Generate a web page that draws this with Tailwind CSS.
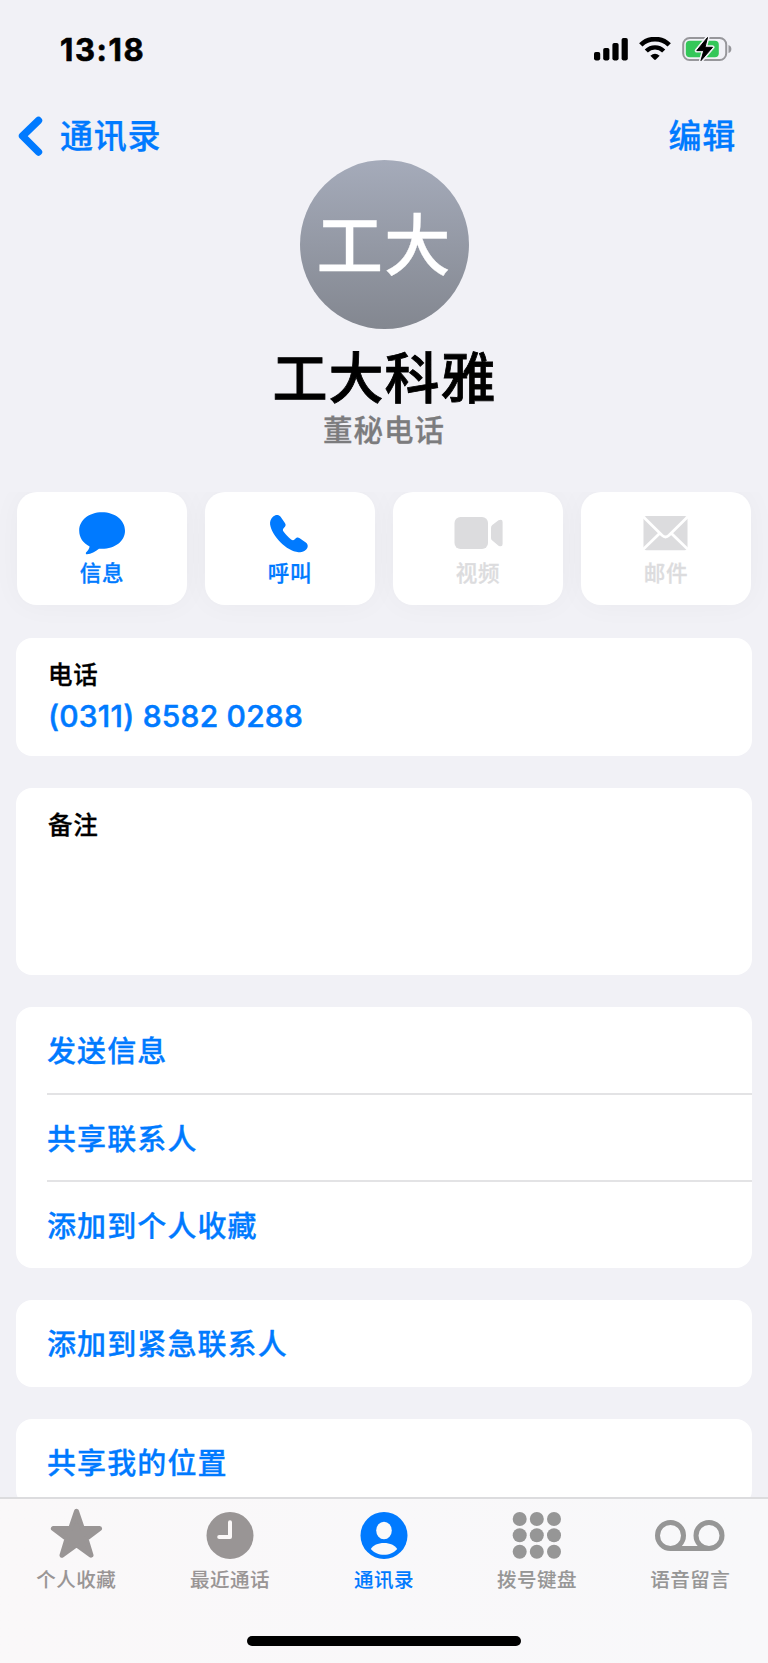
<!DOCTYPE html>
<html lang="zh-CN">
<head>
    <meta charset="UTF-8">
    <meta name="viewport" content="width=device-width, initial-scale=1.0">
    <title>工大科雅 | 通讯录</title>
    <script src="https://cdn.jsdelivr.net/npm/@tailwindcss/browser@4"></script>
    <style>
        body { font-family: Inter, "Noto Sans CJK SC", sans-serif; -webkit-text-stroke: 0.3px currentColor; }
    </style>
</head>
<body class="bg-[#f1f1f6] font-medium text-black">
    <div class="flex h-[1663px] w-[768px] flex-col overflow-hidden">
        <div class="flex h-[98px] shrink-0 items-center justify-between pl-[60px] pr-[36px]">
            <span class="pt-px text-[31px] leading-[30px] font-bold tracking-[1.6px] [-webkit-text-stroke:0.6px]">13:18</span>
            <div class="flex items-center">
                <svg class="mr-[11px]" width="34" height="24" viewBox="0 0 34 24">
                    <rect x="0" y="15" width="6.2" height="8.4" rx="1.8"/>
                    <rect x="9.2" y="11" width="6.2" height="12.4" rx="1.8"/>
                    <rect x="18.4" y="6" width="6.2" height="17.4" rx="1.8"/>
                    <rect x="27.6" y="1" width="6.2" height="22.4" rx="1.8"/>
                </svg>
                <svg class="mr-[11px]" width="32" height="24" viewBox="0 0 32 24">
                    <path d="M1.8 7.9 A20.3 20.3 0 0 1 30.2 7.9" fill="none" stroke="#000" stroke-width="4.8"/>
                    <path d="M7.3 14 A12.3 12.3 0 0 1 24.7 14" fill="none" stroke="#000" stroke-width="4.4"/>
                    <path d="M11.4 18.7 Q16 15 20.6 18.7 L16.9 22.6 Q16 23.4 15.1 22.6 Z"/>
                </svg>
                <svg width="50" height="26" viewBox="0 0 50 26">
                    <rect x="1.2" y="2" width="43" height="22" rx="6.5" fill="none" stroke="#97979b" stroke-width="2"/>
                    <path d="M46.5 9 Q49.4 10 49.4 13 T46.5 17 Z" fill="#97979b"/>
                    <rect x="3.8" y="4.8" width="33" height="16.4" rx="4" fill="#34c759"/>
                    <path d="M25.5 1.5 L14.8 14.6 H21.8 L19 24.6 L30.5 11.3 H23 Z" stroke="#f1f1f6" stroke-width="4" stroke-linejoin="round"/>
                    <path d="M25.5 1.5 L14.8 14.6 H21.8 L19 24.6 L30.5 11.3 H23 Z" stroke="#000" stroke-width="1" stroke-linejoin="round"/>
                </svg>
            </div>
        </div>

        <div class="flex h-[62px] shrink-0 items-start justify-between pl-[18px] pr-[32px] pt-[18px] text-[33px] leading-[40px] tracking-[0.8px] text-[#007aff]">
            <a href="#" class="flex">
                <svg class="mr-[17px]" width="25" height="40" viewBox="0 0 25 40">
                    <path d="M20.5 4.5 L4.5 20 L20.5 36" fill="none" stroke="#007aff" stroke-width="7.4" stroke-linecap="round" stroke-linejoin="round"/>
                </svg>
                通讯录
            </a>
            <a href="#">编辑</a>
        </div>

        <header class="flex h-[332px] shrink-0 flex-col items-center">
            <div class="flex size-[169px] items-center justify-center rounded-full bg-linear-to-b from-[#a5abba] to-[#838790] pt-[3px] text-[66.5px] leading-[66px] tracking-[1px] text-white">工大</div>
            <h1 class="mt-[19px] pl-px text-[55px] leading-[60px] tracking-[1px] [-webkit-text-stroke:0.8px]">工大科雅</h1>
            <p class="mt-[2px] text-[29.5px] leading-[40px] tracking-[1px] text-[#7c7c7e]">董秘电话</p>
        </header>

        <main class="flex flex-1 flex-col overflow-hidden px-4 text-[#007aff]">
            <div class="mb-[33px] flex shrink-0 justify-between px-px text-[21.5px] leading-[26px] tracking-[0.8px]">
                <div class="flex h-[113px] w-[170px] flex-col items-center rounded-[20px] bg-white pt-[17px] shadow-[0_0_30px_rgba(0,0,0,0.035)]">
                    <svg width="48" height="48" viewBox="0 0 48 48" fill="currentColor">
                        <path d="M24 3.3 C37 3.3 47 11.3 47 21.7 C47 32 37 39.8 24 39.8 L21 39.7 C17.5 42.6 13 45.2 9 45.3 C7.8 45.3 7.4 44 8.2 43.2 C10 41.5 11.4 39.6 11.6 37.4 C5 34 1.2 28.5 1.2 21.7 C1.2 11.3 11 3.3 24 3.3 Z"/>
                    </svg>
                    <span class="mt-[3px]">信息</span>
                </div>
                <div class="flex h-[113px] w-[170px] flex-col items-center rounded-[20px] bg-white pt-[17px] shadow-[0_0_30px_rgba(0,0,0,0.035)]">
                    <svg width="48" height="48" viewBox="0 0 48 48" fill="currentColor">
                        <path d="M7.2 7.6 C9.2 5.6 12.7 5.2 14.6 7.8 L18.9 14 C20.2 16 19.6 17.2 18 18.8 C16.3 20.5 16.6 21.4 17.9 23.1 C20 26 22 28 24.8 30.2 C26.4 31.5 27.3 31.8 28.8 30.3 C30.4 28.6 31.7 28 33.7 29.3 L39.8 33.5 C42.6 35.5 42 38.8 40.2 40.6 C37.8 43 35.4 43.6 32.4 43.2 C26.4 42.4 19.9 38.8 14.4 33.2 C8.8 27.6 4.9 21 4.1 15.6 C3.8 12.5 4.7 10 7.2 7.6 Z"/>
                    </svg>
                    <span class="mt-[3px]">呼叫</span>
                </div>
                <div class="flex h-[113px] w-[170px] flex-col items-center rounded-[20px] bg-white pt-[17px] text-[#dcdcde] shadow-[0_0_30px_rgba(0,0,0,0.035)]">
                    <svg width="50" height="48" viewBox="0 0 50 48" fill="currentColor">
                        <rect x="1.5" y="8" width="33.5" height="32" rx="6"/>
                        <path d="M38 19 Q38 17.2 39.3 16 L45.5 11.3 Q49.6 9.6 49.6 13 V35 Q49.6 38.4 45.5 36.7 L39.3 31.5 Q38 30.5 38 29 Z"/>
                    </svg>
                    <span class="mt-[3px]">视频</span>
                </div>
                <div class="flex h-[113px] w-[170px] flex-col items-center rounded-[20px] bg-white pt-[17px] text-[#dcdcde] shadow-[0_0_30px_rgba(0,0,0,0.035)]">
                    <svg width="48" height="48" viewBox="0 0 48 48">
                        <rect x="1.5" y="7" width="44" height="34.2" rx="3" fill="currentColor"/>
                        <path d="M1 7.5 L20 26.3 Q23.5 29.6 27 26.3 L46 7.5 M1 40.5 L17.5 24.4 M46 40.5 L29.5 24.4" fill="none" stroke="#fff" stroke-width="2.8"/>
                    </svg>
                    <span class="mt-[3px]">邮件</span>
                </div>
            </div>

            <section class="mb-8 h-[118px] shrink-0 rounded-2xl bg-white px-8 pt-[21px]">
                <h2 class="text-[24.5px] leading-[32px] tracking-[0.8px] text-black">电话</h2>
                <p class="mt-[7px] text-[30px] leading-[36px] tracking-[0.2px] [-webkit-text-stroke:0.5px]">(0311) 8582 0288</p>
            </section>

            <section class="mb-8 h-[187px] shrink-0 rounded-2xl bg-white px-8 pt-[21px]">
                <h2 class="text-[24.5px] leading-[32px] tracking-[0.8px] text-black">备注</h2>
            </section>

            <ul class="mb-8 shrink-0 rounded-2xl bg-white pl-[31px] text-[29px] leading-[90px] tracking-[1.1px]">
                <li class="h-[88px] border-b-2 border-[#e3e3e5]">发送信息</li>
                <li class="h-[87px] border-b-2 border-[#e3e3e5]">共享联系人</li>
                <li class="h-[86px]">添加到个人收藏</li>
            </ul>

            <ul class="mb-8 h-[87px] shrink-0 rounded-2xl bg-white pl-[31px] text-[29px] leading-[90px] tracking-[1.1px]">
                <li>添加到紧急联系人</li>
            </ul>

            <ul class="h-[87px] shrink-0 rounded-2xl bg-white pl-[31px] text-[29px] leading-[90px] tracking-[1.1px]">
                <li>共享我的位置</li>
            </ul>
        </main>

        <nav class="flex h-[166px] shrink-0 flex-col items-center border-t-2 border-[#dcdcde] bg-linear-to-r from-[#faf8f9] to-[#f8f8fa] text-[#969696] [-webkit-text-stroke:0.1px]">
            <div class="grid h-[137px] w-full shrink-0 grid-cols-5 text-[19.5px] leading-[24px] tracking-[0.5px]">
                <a href="#" class="flex flex-col items-center pt-[8px] text-[#999595]">
                    <svg width="54" height="56" viewBox="0 0 54 56" fill="currentColor" stroke="currentColor" stroke-width="5" stroke-linejoin="round">
                        <path d="M26.5 4.3 L32.3 21.4 L49.6 21.6 L36 31.8 L41 48.2 L26.5 37.8 L12 48.2 L17 31.8 L3.4 21.6 L20.7 21.4 Z"/>
                    </svg>
                    <span class="mt-[5px] mr-px">个人收藏</span>
                </a>
                <a href="#" class="flex flex-col items-center pt-[8px] text-[#999595]">
                    <svg class="mr-px" width="54" height="56" viewBox="0 0 54 56">
                        <circle cx="27" cy="28.5" r="23.5" fill="currentColor"/>
                        <path d="M27 15.3 V30 H16.2" fill="none" stroke="#fbf8f8" stroke-width="4" stroke-linecap="round" stroke-linejoin="round"/>
                    </svg>
                    <span class="mt-[5px] mr-px">最近通话</span>
                </a>
                <a href="#" class="flex flex-col items-center pt-[8px] text-[#007aff]">
                    <svg width="54" height="56" viewBox="0 0 54 56">
                        <circle cx="27" cy="28.5" r="23.5" fill="currentColor"/>
                        <ellipse cx="27" cy="23.5" rx="7.8" ry="8.8" fill="#f9f9fa"/>
                        <path d="M13.8 42 C16 38.3 21 36 27 36 C33 36 38 38.3 40.2 42 C37 45.6 32.3 47.8 27 47.8 C21.7 47.8 17 45.6 13.8 42 Z" fill="#f9f9fa"/>
                    </svg>
                    <span class="mt-[5px]">通讯录</span>
                </a>
                <a href="#" class="flex flex-col items-center pt-[8px]">
                    <svg class="mr-[2px]" width="54" height="56" viewBox="0 0 54 56" fill="currentColor">
                        <circle cx="9.7" cy="12" r="7"/>
                        <circle cx="26.8" cy="12" r="7"/>
                        <circle cx="44" cy="12" r="7"/>
                        <circle cx="9.7" cy="28.3" r="7"/>
                        <circle cx="26.8" cy="28.3" r="7"/>
                        <circle cx="44" cy="28.3" r="7"/>
                        <circle cx="9.7" cy="44.7" r="7"/>
                        <circle cx="26.8" cy="44.7" r="7"/>
                        <circle cx="44" cy="44.7" r="7"/>
                    </svg>
                    <span class="mt-[5px] mr-px">拨号键盘</span>
                </a>
                <a href="#" class="flex flex-col items-center pt-[8px]">
                    <svg class="mr-[2px]" width="72" height="56" viewBox="0 0 72 56" fill="none" stroke="currentColor" stroke-width="5">
                        <circle cx="16.5" cy="28.5" r="13"/>
                        <circle cx="55" cy="28.5" r="13"/>
                        <path d="M16.5 41.5 H55"/>
                    </svg>
                    <span class="mt-[5px] mr-[2px]">语音留言</span>
                </a>
            </div>
            <div class="h-[10px] w-[274px] shrink-0 rounded-full bg-black"></div>
        </nav>
    </div>
</body>
</html>
